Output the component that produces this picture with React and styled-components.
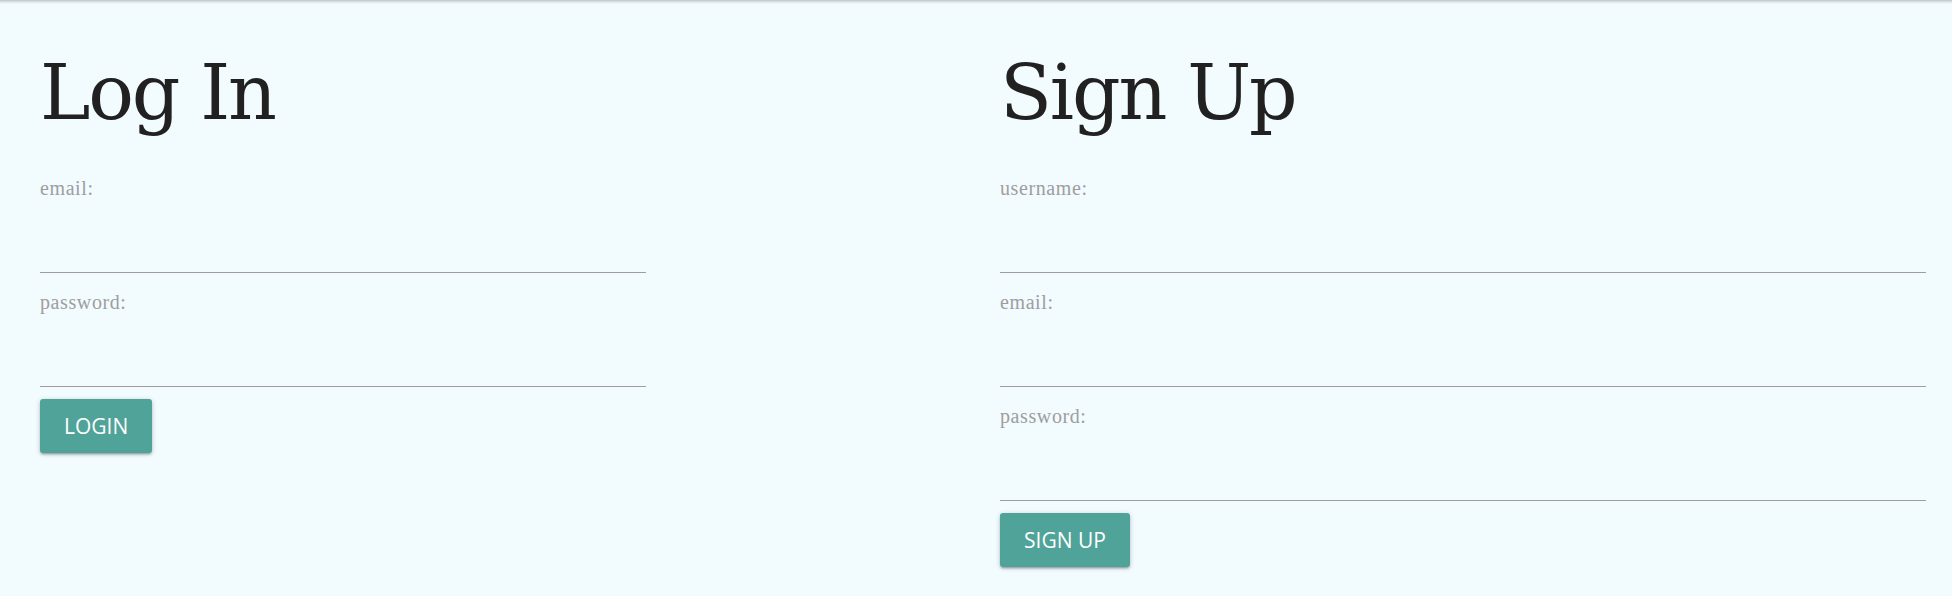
import React from "react";
import styled, { createGlobalStyle } from "styled-components";

const Global = createGlobalStyle`
  html, body { margin: 0; padding: 0; background: #f2fbfe; }
  body { font-family: "Liberation Serif", serif; }
  * { box-sizing: border-box; }
`;

const Page = styled.div`
  min-height: 596px;
  background: #f2fbfe;
`;

const TopShadow = styled.div`
  height: 4px;
  background: linear-gradient(#bcc4c8 0%, #d9e1e4 40%, #f2fbfe 100%);
`;

const Columns = styled.main`
  display: grid;
  grid-template-columns: 960px 1fr;
  padding: 0 26px 0 40px;
`;

const Column = styled.section`
  display: flex;
  flex-direction: column;
`;

const Heading = styled.h1`
  margin: 51px 0 47px;
  font-family: "DejaVu Serif", serif;
  font-weight: 400;
  font-size: 76px;
  line-height: 76px;
  letter-spacing: -2.2px;
  color: #212121;
`;

const Form = styled.form`
  display: flex;
  flex-direction: column;
  width: ${(p) => p.$width || "100%"};
`;

const Field = styled.div`
  display: flex;
  flex-direction: column;
  margin-bottom: ${(p) => (p.$last ? "12px" : "19px")};
`;

const Label = styled.label`
  font-family: "Liberation Serif", serif;
  font-size: 20px;
  line-height: 20px;
  letter-spacing: 0.6px;
  color: #9e9e9e;
`;

const Input = styled.input`
  height: 75px;
  border: none;
  border-bottom: 1px solid #9e9e9e;
  background: transparent;
  outline: none;
  padding: 0;
  font-size: 16px;
  width: 100%;
`;

const Button = styled.button`
  align-self: flex-start;
  height: 54px;
  padding: 0 24px;
  border: none;
  border-radius: 3px;
  background: #50a399;
  color: #ffffff;
  font-family: "Open Sans", sans-serif;
  font-size: 21px;
  text-transform: uppercase;
  box-shadow: 0 2px 2px 0 rgba(0, 0, 0, 0.14), 0 3px 1px -2px rgba(0, 0, 0, 0.12),
    0 1px 5px 0 rgba(0, 0, 0, 0.2);
  cursor: pointer;
`;

function FormField({ id, label, type = "text", last }) {
  return (
    <Field $last={last}>
      <Label htmlFor={id}>{label}</Label>
      <Input id={id} type={type} />
    </Field>
  );
}

export default function App() {
  return (
    <Page>
      <Global />
      <TopShadow />
      <Columns>
        <Column>
          <Heading>Log In</Heading>
          <Form $width="606px" onSubmit={(e) => e.preventDefault()}>
            <FormField id="login-email" label="email:" type="email" />
            <FormField id="login-password" label="password:" type="password" last />
            <Button type="submit">Login</Button>
          </Form>
        </Column>
        <Column>
          <Heading>Sign Up</Heading>
          <Form onSubmit={(e) => e.preventDefault()}>
            <FormField id="signup-username" label="username:" />
            <FormField id="signup-email" label="email:" type="email" />
            <FormField id="signup-password" label="password:" type="password" last />
            <Button type="submit">Sign Up</Button>
          </Form>
        </Column>
      </Columns>
    </Page>
  );
}
